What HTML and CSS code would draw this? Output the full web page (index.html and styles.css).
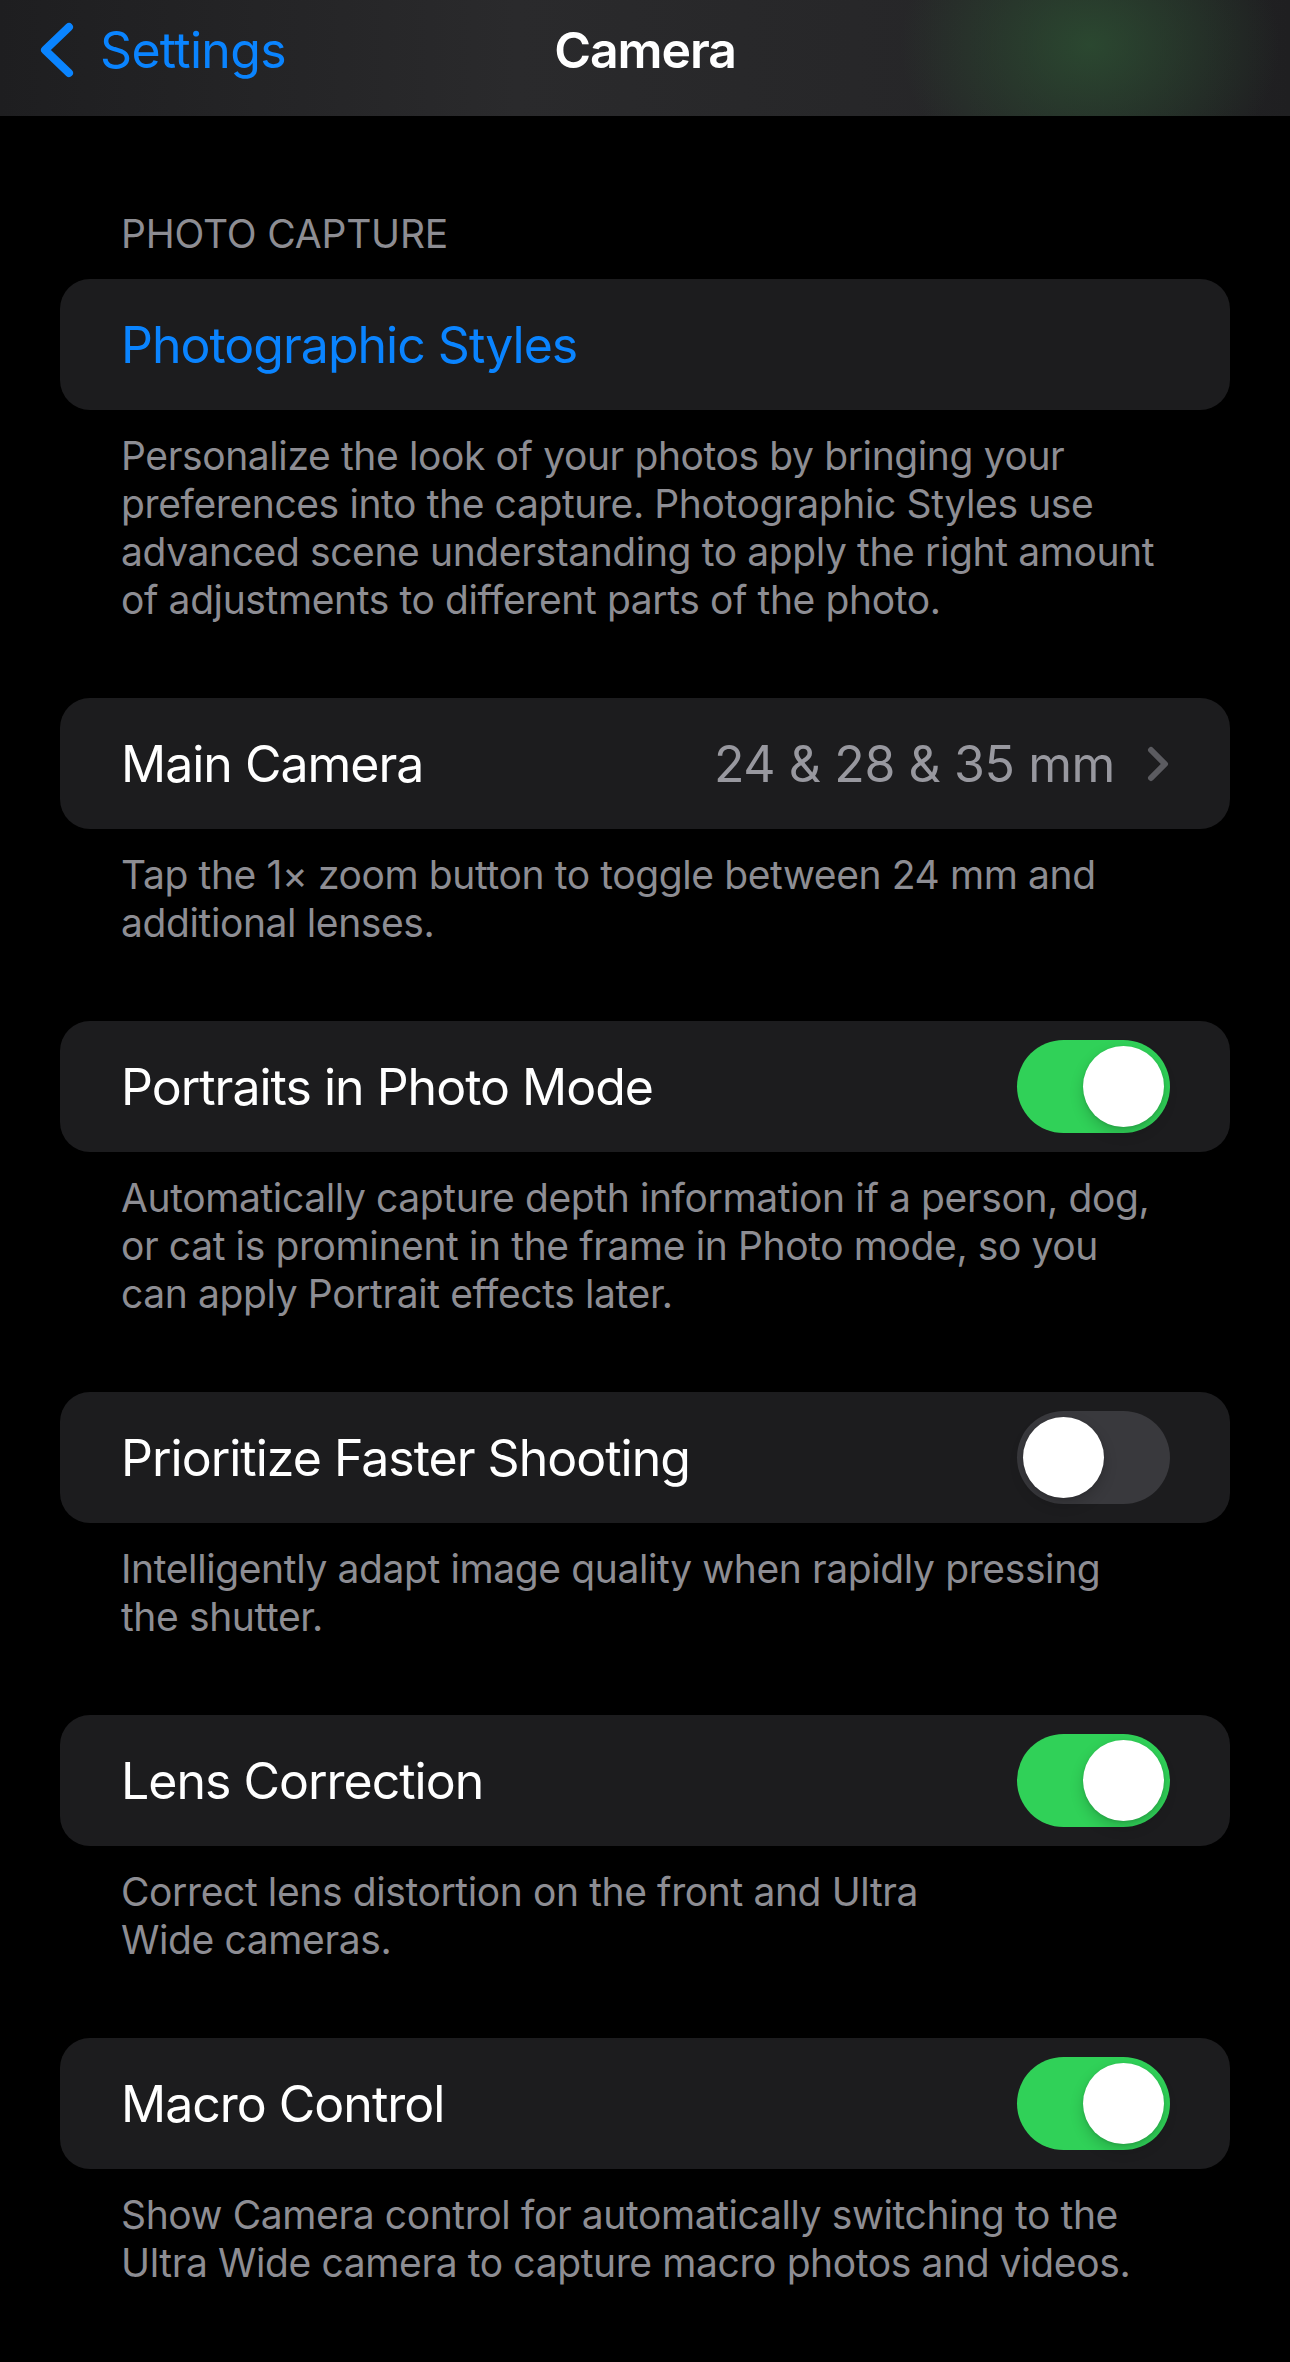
FILE: index.html
```html
<!DOCTYPE html>
<html lang="en">
<head>
<meta charset="utf-8">
<title>Camera</title>
<link rel="stylesheet" href="styles.css">
</head>
<body>
<header class="nav">
  <a class="back" href="#">
    <svg class="back-icon" viewBox="0 0 38 56" width="38" height="56" aria-hidden="true">
      <polyline points="33,5 9,28 33,51" fill="none" stroke="#0a84ff" stroke-width="8" stroke-linecap="round" stroke-linejoin="round"/>
    </svg>
    <span class="back-label">Settings</span>
  </a>
  <h1 class="title">Camera</h1>
  <div class="nav-spacer"></div>
</header>

<main class="content">
  <section class="group">
    <div class="group-header">PHOTO CAPTURE</div>
    <div class="card">
      <div class="row"><span class="label link">Photographic Styles</span></div>
    </div>
    <p class="footer">Personalize the look of your photos by bringing your<br>preferences into the capture. Photographic Styles use<br>advanced scene understanding to apply the right amount<br>of adjustments to different parts of the photo.</p>
  </section>

  <section class="group">
    <div class="card">
      <div class="row">
        <span class="label">Main Camera</span>
        <span class="value">24 &amp; 28 &amp; 35 mm</span>
        <svg class="chevron" viewBox="0 0 22 36" width="22" height="36" aria-hidden="true">
          <polyline points="4,4 18,18 4,32" fill="none" stroke="#5b5b60" stroke-width="6" stroke-linecap="round" stroke-linejoin="round"/>
        </svg>
      </div>
    </div>
    <p class="footer">Tap the 1× zoom button to toggle between 24 mm and<br>additional lenses.</p>
  </section>

  <section class="group">
    <div class="card">
      <div class="row">
        <span class="label">Portraits in Photo Mode</span>
        <span class="switch on"><span class="knob"></span></span>
      </div>
    </div>
    <p class="footer">Automatically capture depth information if a person, dog,<br>or cat is prominent in the frame in Photo mode, so you<br>can apply Portrait effects later.</p>
  </section>

  <section class="group">
    <div class="card">
      <div class="row">
        <span class="label">Prioritize Faster Shooting</span>
        <span class="switch off"><span class="knob"></span></span>
      </div>
    </div>
    <p class="footer">Intelligently adapt image quality when rapidly pressing<br>the shutter.</p>
  </section>

  <section class="group">
    <div class="card">
      <div class="row">
        <span class="label">Lens Correction</span>
        <span class="switch on"><span class="knob"></span></span>
      </div>
    </div>
    <p class="footer">Correct lens distortion on the front and Ultra<br>Wide cameras.</p>
  </section>

  <section class="group">
    <div class="card">
      <div class="row">
        <span class="label">Macro Control</span>
        <span class="switch on"><span class="knob"></span></span>
      </div>
    </div>
    <p class="footer">Show Camera control for automatically switching to the<br>Ultra Wide camera to capture macro photos and videos.</p>
  </section>
</main>
</body>
</html>
```

FILE: styles.css
```css
* {
  box-sizing: border-box;
}

html, body {
  margin: 0;
  padding: 0;
  background: #000;
}

body {
  width: 1290px;
  min-height: 2362px;
  font-family: Inter, "Noto Sans", "Liberation Sans", sans-serif;
  color: #fff;
  -webkit-font-smoothing: antialiased;
}

/* Navigation bar */
.nav {
  height: 116px;
  display: grid;
  grid-template-columns: 1fr auto 1fr;
  align-items: start;
  padding-top: 20px;
  background:
    radial-gradient(ellipse 190px 150px at 1090px 45px, rgba(44, 78, 50, 0.85), rgba(44, 78, 50, 0) 100%),
    linear-gradient(90deg, #1e1e20 0%, #2a2a2c 40%, #262628 75%, #1f1f21 100%);
}

.back {
  display: flex;
  align-items: center;
  gap: 26px;
  height: 60px;
  padding-left: 36px;
  text-decoration: none;
  color: #0a84ff;
  justify-self: start;
}

.back-icon {
  display: block;
  flex: none;
}

.back-label {
  font-size: 50px;
  line-height: 60px;
  letter-spacing: -0.014em;
}

.title {
  margin: 0;
  font-size: 50px;
  line-height: 60px;
  font-weight: 600;
  letter-spacing: -0.022em;
  color: #fff;
}

/* Content */
.content {
  padding-top: 94px;
  padding-bottom: 20px;
}

.group {
  margin-bottom: 74px;
}

.group-header {
  padding: 0 0 0 121px;
  margin-bottom: 21px;
  font-size: 39px;
  line-height: 48px;
  color: #8d8d93;
  letter-spacing: -0.005em;
}

.card {
  margin: 0 60px;
  background: #1c1c1e;
  border-radius: 30px;
}

.row {
  height: 131px;
  display: flex;
  align-items: center;
  padding: 0 60px 0 61px;
}

.label {
  flex: 1;
  font-size: 50px;
  line-height: 60px;
  letter-spacing: -0.02em;
  white-space: nowrap;
}

.label.link {
  color: #0a84ff;
}

.value {
  font-size: 50px;
  line-height: 60px;
  letter-spacing: -0.008em;
  color: #98989f;
  white-space: nowrap;
}

.chevron {
  display: block;
  flex: none;
  margin-left: 32px;
  margin-right: 1px;
}

.footer {
  margin: 0 40px 0 60px;
  padding: 22px 0 0 61px;
  font-size: 39px;
  line-height: 48px;
  color: #8d8d93;
  letter-spacing: -0.01em;
}

/* Switches */
.switch {
  flex: none;
  position: relative;
  width: 153px;
  height: 93px;
  border-radius: 47px;
  background: #39393d;
}

.switch.on {
  background: #30d158;
}

.knob {
  position: absolute;
  top: 6px;
  left: 6px;
  width: 81px;
  height: 81px;
  border-radius: 50%;
  background: #fff;
  box-shadow: 0 6px 14px rgba(0, 0, 0, 0.18), 0 1px 3px rgba(0, 0, 0, 0.12);
}

.switch.on .knob {
  left: 66px;
}
```
